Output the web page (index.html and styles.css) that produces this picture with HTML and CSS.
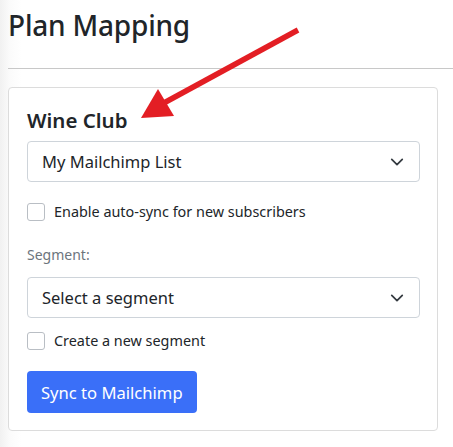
FILE: index.html
```html
<!DOCTYPE html>
<html>
<head>
    <meta charset="UTF-8" />
    <title>Plan Mapping</title>
    <link rel="stylesheet" href="styles.css">
</head>
<body>
    <div class="page">
        <h1 class="title">Plan Mapping</h1>
        <hr class="rule" />

        <div class="card">
            <h2 class="card-title">Wine Club</h2>

            <div class="select">
                <span>My Mailchimp List</span>
                <svg class="chevron" width="14" height="14" viewBox="0 0 16 16"><path d="M2 5l6 6 6-6" fill="none" stroke="#343a40" stroke-width="2" stroke-linecap="round" stroke-linejoin="round"/></svg>
            </div>

            <label class="check check-first"><span class="box"></span>Enable auto-sync for new subscribers</label>

            <div class="field-label">Segment:</div>

            <div class="select">
                <span>Select a segment</span>
                <svg class="chevron" width="14" height="14" viewBox="0 0 16 16"><path d="M2 5l6 6 6-6" fill="none" stroke="#343a40" stroke-width="2" stroke-linecap="round" stroke-linejoin="round"/></svg>
            </div>

            <label class="check"><span class="box"></span>Create a new segment</label>

            <button class="btn">Sync to Mailchimp</button>
        </div>
    </div>

    <svg class="arrow" width="453" height="447" viewBox="0 0 453 447">
        <line x1="298" y1="30" x2="162" y2="104" stroke="#e31e24" stroke-width="5.5" stroke-linecap="butt"/>
        <polygon points="141,118 158,89 174,116" fill="#e31e24"/>
    </svg>
</body>
</html>
```

FILE: styles.css
```css
body {
    margin: 0;
    font-family: "Noto Sans", "Open Sans", sans-serif;
    color: #212529;
    background: linear-gradient(to right, #f1f1f1 0px, #fbfbfb 10px, #ffffff 22px);
}

.page {
    padding: 0 15px 0 8px;
}

.title {
    font-size: 28px;
    font-weight: 500;
    margin: 0;
    padding-top: 5px;
    line-height: 40px;
    letter-spacing: -0.2px;
}

.rule {
    border: 0;
    border-top: 1px solid #c8c8c8;
    margin: 23px -15px 18px 0;
}

.card {
    background: #fff;
    border: 1px solid #dcdcdc;
    border-radius: 4px;
    padding: 16px 17px 17px 18px;
}

.card-title {
    font-size: 20.5px;
    font-weight: 600;
    margin: 0 0 5px 0;
    line-height: 32px;
}

.select {
    display: flex;
    align-items: center;
    justify-content: space-between;
    height: 39px;
    border: 1px solid #ced4da;
    border-radius: 4px;
    padding: 0 15px 0 14px;
    font-size: 16.5px;
}

.chevron {
    display: block;
}

.check {
    display: flex;
    align-items: center;
    font-size: 14.4px;
    line-height: 22px;
    margin-top: 12px;
}

.check-first {
    margin-top: 19px;
}

.box {
    width: 18px;
    height: 18px;
    border: 1px solid #b9bec4;
    border-radius: 3px;
    margin-right: 9px;
    box-sizing: border-box;
}

.field-label {
    font-size: 14px;
    color: #6c757d;
    margin: 21px 0 11px 0;
    line-height: 22px;
}

.btn {
    margin-top: 19px;
    font-family: "Noto Sans", "Open Sans", sans-serif;
    font-size: 16.6px;
    color: #fff;
    background-color: #3a6ff8;
    border: 0;
    border-radius: 4px;
    height: 42px;
    padding: 0 14px;
    display: block;
}

.arrow {
    position: absolute;
    left: 0;
    top: 0;
    pointer-events: none;
}
```
